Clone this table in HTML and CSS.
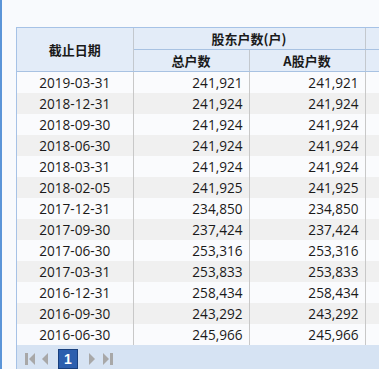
FILE: index.html
```html
<!DOCTYPE html>
<html>
<head>
<meta charset="utf-8">
<link rel="stylesheet" href="styles.css">
</head>
<body>
<div class="frame">
  <div class="grid">
    <table class="tbl">
      <colgroup>
        <col class="c1"><col class="c2"><col class="c3"><col class="c4">
      </colgroup>
      <thead>
        <tr class="h1">
          <th rowspan="2">截止日期</th>
          <th colspan="2">股东户数(户)</th>
          <th></th>
        </tr>
        <tr class="h2">
          <th>总户数</th>
          <th>A股户数</th>
          <th></th>
        </tr>
      </thead>
      <tbody>
        <tr><td class="d">2019-03-31</td><td class="n">241,921</td><td class="n">241,921</td><td></td></tr>
        <tr><td class="d">2018-12-31</td><td class="n">241,924</td><td class="n">241,924</td><td></td></tr>
        <tr><td class="d">2018-09-30</td><td class="n">241,924</td><td class="n">241,924</td><td></td></tr>
        <tr><td class="d">2018-06-30</td><td class="n">241,924</td><td class="n">241,924</td><td></td></tr>
        <tr><td class="d">2018-03-31</td><td class="n">241,924</td><td class="n">241,924</td><td></td></tr>
        <tr><td class="d">2018-02-05</td><td class="n">241,925</td><td class="n">241,925</td><td></td></tr>
        <tr><td class="d">2017-12-31</td><td class="n">234,850</td><td class="n">234,850</td><td></td></tr>
        <tr><td class="d">2017-09-30</td><td class="n">237,424</td><td class="n">237,424</td><td></td></tr>
        <tr><td class="d">2017-06-30</td><td class="n">253,316</td><td class="n">253,316</td><td></td></tr>
        <tr><td class="d">2017-03-31</td><td class="n">253,833</td><td class="n">253,833</td><td></td></tr>
        <tr><td class="d">2016-12-31</td><td class="n">258,434</td><td class="n">258,434</td><td></td></tr>
        <tr><td class="d">2016-09-30</td><td class="n">243,292</td><td class="n">243,292</td><td></td></tr>
        <tr><td class="d">2016-06-30</td><td class="n">245,966</td><td class="n">245,966</td><td></td></tr>
      </tbody>
    </table>
    <div class="pager">
      <span class="pbtn first">
        <svg width="10" height="12" viewBox="0 0 10 12"><rect x="0" y="0" width="3" height="12" fill="#a8a8a8"/><path d="M10 0 L4 6 L10 12 Z" fill="#a8a8a8"/></svg>
      </span>
      <span class="pbtn prev">
        <svg width="6" height="12" viewBox="0 0 6 12"><path d="M6 0 L0 6 L6 12 Z" fill="#a8a8a8"/></svg>
      </span>
      <span class="page">1</span>
      <span class="pbtn next">
        <svg width="6" height="12" viewBox="0 0 6 12"><path d="M0 0 L6 6 L0 12 Z" fill="#a8a8a8"/></svg>
      </span>
      <span class="pbtn last">
        <svg width="10" height="12" viewBox="0 0 10 12"><path d="M0 0 L6 6 L0 12 Z" fill="#a8a8a8"/><rect x="7" y="0" width="3" height="12" fill="#a8a8a8"/></svg>
      </span>
    </div>
  </div>
</div>
</body>
</html>
```

FILE: styles.css
```css
html, body {
  margin: 0;
  padding: 0;
  background: #f8fafd;
  overflow: hidden;
}
.frame {
  height: 369px;
  border-left: 2px solid #5b95d8;
  padding: 27px 0 0 14px;
  box-sizing: border-box;
  overflow: hidden;
}
.grid {
  border-left: 1px solid #a6c2e6;
  border-top: 1px solid #a6c2e6;
  font-family: "Noto Sans CJK SC", "Noto Sans", sans-serif;
  font-size: 13px;
  color: #1a1a1a;
  overflow: hidden;
}
.tbl {
  border-collapse: collapse;
  table-layout: fixed;
  width: 362px;
}
.c1 { width: 116px; }
.c2 { width: 116px; }
.c3 { width: 116px; }
.c4 { width: 14px; }
th {
  background: #e3ecf8;
  font-weight: bold;
  font-size: 13px;
  height: 21px;
  padding: 0;
  border-right: 1px solid #c3c8ce;
  border-bottom: 1px solid #a8c2e2;
  line-height: 20px;
}
td {
  height: 21px;
  padding: 0 6px 0 4px;
  border-right: 1px solid #c8c8c8;
  line-height: 21px;
  white-space: nowrap;
  font-family: "Open Sans", "Noto Sans", sans-serif;
  font-size: 13.6px;
}
tbody tr:nth-child(odd) td { background: #fafbfd; }
tbody tr:nth-child(even) td { background: #f0f0f0; }
td.d { text-align: center; padding: 0; }
td.n { text-align: right; }
.pager {
  height: 27px;
  background: #d6e3f3;
  display: flex;
  align-items: center;
  padding-left: 8px;
}
.pbtn {
  display: flex;
  align-items: center;
}
.prev { margin-left: 7px; }
.next { margin-left: 11px; }
.last { margin-left: 8px; }
.page {
  width: 18px;
  height: 18px;
  background: #2c5fae;
  border: 1px solid #183f7d;
  color: #fff;
  font-weight: bold;
  font-family: "Liberation Sans", sans-serif;
  font-size: 14px;
  display: flex;
  align-items: center;
  justify-content: center;
  margin-left: 10px;
}
```
